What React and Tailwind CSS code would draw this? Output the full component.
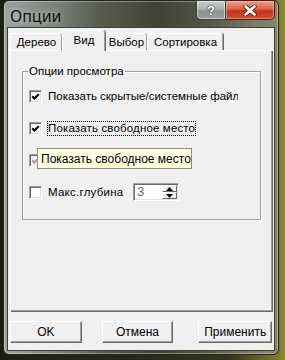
import React from "react";

// small classic checkmark
const Tick = ({ color = "#000" }) => (
  <svg width="9" height="9" viewBox="0 0 9 9">
    <path d="M1.2 4.2 L3.5 6.5 L7.8 2.2" fill="none" stroke={color} strokeWidth="2" />
  </svg>
);

const Box = ({ checked, disabled }) => (
  <span
    className={`w-[13px] h-[13px] shrink-0 flex items-center justify-center border border-t-[#a0a0a0] border-l-[#a0a0a0] border-b-white border-r-white shadow-[inset_1px_1px_0_#696969,inset_-1px_-1px_0_#e3e3e3] ${
      disabled ? "bg-[#f0f0f0]" : "bg-white"
    }`}
  >
    {checked && <Tick color={disabled ? "#a0a0a0" : "#000"} />}
  </span>
);

const Tab = ({ label, width, active }) => (
  <div
    className={
      active
        ? "h-[21px] mb-[-1px] z-10 flex justify-center pt-[2px] bg-[#f0f0f0] border-t border-l border-white rounded-tl-[2px] rounded-tr-[2px] shadow-[inset_-1px_0_0_#a0a0a0,1px_0_0_#696969]"
        : "h-[17px] flex justify-center pt-[1px] bg-[#f0f0f0] border-t border-l border-white rounded-tl-[2px] rounded-tr-[2px] shadow-[inset_-1px_0_0_#a0a0a0,1px_0_0_#696969]"
    }
    style={{ width }}
  >
    <span className="text-[11.5px] leading-[14px]">{label}</span>
  </div>
);

const Button = ({ children, className = "" }) => (
  <button
    className={`h-[22px] bg-[#f0f0f0] border border-t-white border-l-white border-b-[#696969] border-r-[#696969] shadow-[inset_-1px_-1px_0_#a0a0a0] text-[12px] leading-none text-black ${className}`}
  >
    {children}
  </button>
);

export default function App() {
  return (
    <div className="w-[285px] h-[360px] overflow-hidden bg-[linear-gradient(90deg,#1d1e16_0%,#26271c_40%,#33341f_80%,#7f7c2c_98%,#8c8a36_100%)] font-['Liberation_Sans',Arial,sans-serif] text-black">
      <div className="ml-[3px] w-[276px] h-[355px] flex flex-col px-[4px] pb-[4px] rounded-[6px] border border-[#22241b] shadow-[inset_0_0_0_1px_rgba(255,255,255,0.35)] bg-[linear-gradient(90deg,#9ba3a2_0%,#7f877f_16%,#575b4d_36%,#404236_56%,#535545_74%,#7a7d6c_92%,#85866a_100%)]">
        {/* title bar */}
        <div className="h-[28px] flex items-start justify-between">
          <span className="pl-[2px] pt-[6px] text-[16px] leading-[18px] text-[#111] font-['Noto_Sans',sans-serif] [text-shadow:0_0_6px_rgba(255,255,255,0.6)]">
            Опции
          </span>
          <div className="flex mt-[-1px] mr-[-1px]">
            <div className="w-[30px] h-[20px] flex items-center justify-center rounded-bl-[5px] border border-[#3a3e40] bg-[linear-gradient(180deg,#c9cdcc_0%,#aeb3b2_45%,#8c9392_55%,#9aa09f_100%)] shadow-[inset_0_0_0_1px_rgba(255,255,255,0.5)]">
              <span className="text-white font-bold text-[13px] leading-none [text-shadow:0_0_2px_#333,0_0_1px_#333]">?</span>
            </div>
            <div className="w-[49px] h-[20px] flex items-center justify-center rounded-br-[5px] border border-l-0 border-[#4a1a10] bg-[linear-gradient(180deg,#e9a08a_0%,#d7664a_45%,#c3361c_55%,#d24d2e_100%)] shadow-[inset_0_0_0_1px_rgba(255,220,200,0.45)]">
              <svg width="14" height="11" viewBox="0 0 14 11">
                <path d="M2.5 1.5 L11.5 9.5 M11.5 1.5 L2.5 9.5" stroke="#5a2414" strokeWidth="4.4" strokeLinecap="round" />
                <path d="M2.5 1.5 L11.5 9.5 M11.5 1.5 L2.5 9.5" stroke="#fff" strokeWidth="2.6" strokeLinecap="round" />
              </svg>
            </div>
          </div>
        </div>

        {/* client area */}
        <div className="flex-1 flex flex-col bg-[#f0f0f0] px-[2px] pt-[2px] pb-[7px] shadow-[0_0_0_1px_#3e4236]">
          {/* tabs */}
          <div className="h-[20px] flex items-end">
            <Tab label="Дерево" width={52} />
            <Tab label="Вид" width={43} active />
            <Tab label="Выбор" width={42} />
            <Tab label="Сортировка" width={76} />
          </div>

          {/* tab page */}
          <div className="h-[261px] bg-[#f0f0f0] border-t border-l border-white shadow-[inset_-1px_-1px_0_#a0a0a0,1px_1px_0_#696969]">
            <fieldset className="ml-[11px] mt-[13px] w-[239px] h-[156px] border border-[#a0a0a0] shadow-[inset_1px_1px_0_#fff,1px_1px_0_#fff] pt-[2px]">
              <legend className="ml-[5px] px-[1px] text-[11.5px] leading-[14px]">Опции просмотра</legend>

              <div className="h-[32px] flex items-center pl-[6px]">
                <Box checked />
                <span className="ml-[6px] w-[190px] overflow-hidden whitespace-nowrap text-[11.5px] leading-[14px]">
                  Показать скрытые/системные файлы
                </span>
              </div>

              <div className="h-[32px] flex items-center pl-[6px]">
                <Box checked />
                <span className="ml-[5px] border border-dotted border-black px-0 text-[11.5px] leading-[13px] tracking-[0.15px] whitespace-nowrap">
                  Показать свободное место
                </span>
              </div>

              <div className="h-[32px] flex items-center pl-[6px] relative">
                <Box checked disabled />
                <div className="absolute left-[14px] top-[4px] w-[155px] h-[21px] flex items-center px-[3px] bg-[#ffffe1] border border-[#8f8f80] text-[12px] leading-none whitespace-nowrap">
                  Показать свободное место
                </div>
              </div>

              <div className="h-[32px] flex items-center pl-[6px]">
                <Box />
                <span className="ml-[6px] w-[85px] shrink-0 text-[11.5px] leading-[14px] tracking-[0.25px] whitespace-nowrap">Макс.глубина</span>
                <div className="w-[46px] h-[18px] shrink-0 flex bg-white border border-t-[#a0a0a0] border-l-[#a0a0a0] border-b-white border-r-white shadow-[inset_1px_1px_0_#696969,inset_-1px_-1px_0_#e3e3e3] p-[1px]">
                  <span className="flex-1 pl-[2px] text-[13px] leading-[14px] text-[#6d6d6d]">3</span>
                  <div className="w-[15px] flex flex-col">
                    <div className="flex-1 flex items-center justify-center bg-[#f0f0f0] border border-t-white border-l-white border-b-[#696969] border-r-[#696969]">
                      <svg width="7" height="4" viewBox="0 0 7 4"><path d="M3.5 0 L7 4 L0 4 Z" fill="#000" /></svg>
                    </div>
                    <div className="flex-1 flex items-center justify-center bg-[#f0f0f0] border border-t-white border-l-white border-b-[#696969] border-r-[#696969]">
                      <svg width="7" height="4" viewBox="0 0 7 4"><path d="M0 0 L7 0 L3.5 4 Z" fill="#000" /></svg>
                    </div>
                  </div>
                </div>
              </div>
            </fieldset>
          </div>

          {/* buttons */}
          <div className="mt-[10px] flex">
            <Button className="w-[72px]">OK</Button>
            <Button className="w-[72px] ml-[20px]">Отмена</Button>
            <Button className="w-[74px] ml-[25px]">Применить</Button>
          </div>
        </div>
      </div>
    </div>
  );
}
